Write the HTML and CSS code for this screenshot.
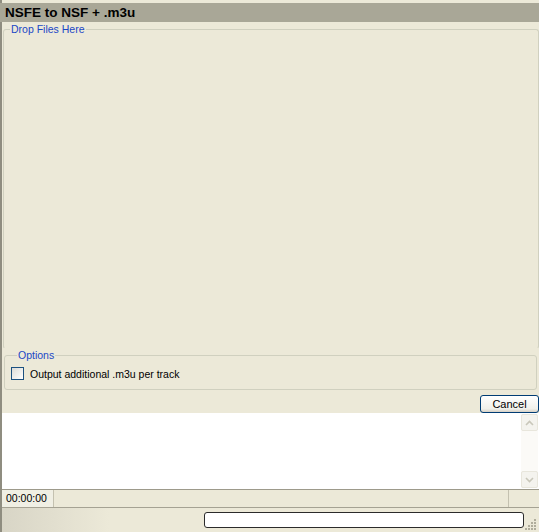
FILE: index.html
```html
<!DOCTYPE html>
<html>
<head>
<meta charset="utf-8">
<link rel="stylesheet" href="styles.css">
</head>
<body>
<div class="window">
  <div class="title">NSFE to NSF + .m3u</div>
  <div class="main">
    <fieldset class="group drop">
      <legend>Drop Files Here</legend>
    </fieldset>
    <fieldset class="group options">
      <legend>Options</legend>
      <label class="check"><span class="box"></span><span>Output additional .m3u per track</span></label>
    </fieldset>
  </div>
  <div class="btnrow"><button class="btn">Cancel</button></div>
  <div class="log">
    <div class="logtext"></div>
    <div class="vscroll">
      <div class="arrow up"><svg width="9" height="6" viewBox="0 0 9 6"><path d="M1 5 L4.5 1.5 L8 5" fill="none" stroke="#c9c7ba" stroke-width="1.6"/></svg></div>
      <div class="track"></div>
      <div class="arrow down"><svg width="9" height="6" viewBox="0 0 9 6"><path d="M1 1 L4.5 4.5 L8 1" fill="none" stroke="#c9c7ba" stroke-width="1.6"/></svg></div>
    </div>
  </div>
  <div class="status">
    <div class="panel time">00:00:00</div>
    <div class="panel fill"></div>
    <div class="panel end"></div>
  </div>
  <div class="bottom">
    <div class="progress"></div>
    <div class="grip">
      <svg width="12" height="12" viewBox="0 0 12 12">
        <g fill="#b0ad9c">
          <rect x="9" y="1" width="2" height="2"/>
          <rect x="6" y="4" width="2" height="2"/><rect x="9" y="4" width="2" height="2"/>
          <rect x="3" y="7" width="2" height="2"/><rect x="6" y="7" width="2" height="2"/><rect x="9" y="7" width="2" height="2"/>
          <rect x="0" y="10" width="2" height="2"/><rect x="3" y="10" width="2" height="2"/><rect x="6" y="10" width="2" height="2"/><rect x="9" y="10" width="2" height="2"/>
        </g>
      </svg>
    </div>
  </div>
</div>
</body>
</html>
```
FILE: styles.css
```css
html, body {
  margin: 0;
  padding: 0;
  background: #ece9d8;
}
.window {
  width: 539px;
  height: 532px;
  border-left: 2px solid #8f8d80;
  box-sizing: border-box;
  display: flex;
  flex-direction: column;
  font-family: "Liberation Sans", Arial, sans-serif;
  font-size: 10.5px;
  color: #000;
}
.title {
  margin-top: 3px;
  height: 19px;
  line-height: 19px;
  background: #a9a797;
  font-weight: bold;
  font-size: 13.5px;
  padding-left: 5px;
  margin-left: -2px;
}
.main {
  height: 369px;
  display: flex;
  flex-direction: column;
  padding: 0 0 0 1px;
}
.group {
  margin: 0;
  padding: 0;
  border: 1px solid #d0d0bf;
  border-radius: 3px;
  min-width: 0;
}
.group legend {
  color: #1a47c6;
  padding: 0 1px;
  margin-left: 6px;
  font-size: 10.5px;
  line-height: 13px;
}
.drop {
  margin-top: 1px;
  flex: 1;
  border-bottom-color: transparent;
}
.options {
  margin: 0 2px 1px 1px;
  height: 41px;
  box-sizing: border-box;
  padding: 5px 6px 0 6px;
}
.check {
  display: flex;
  align-items: center;
  gap: 6px;
}
.box {
  width: 11px;
  height: 11px;
  border: 1px solid #1c5180;
  background: linear-gradient(135deg, #dcdcd7, #fff);
}
.btnrow {
  display: flex;
  justify-content: flex-end;
  height: 22px;
  align-items: flex-end;
}
.btn {
  width: 59px;
  height: 18px;
  margin: 0;
  padding: 0;
  border: 1px solid #003c74;
  border-radius: 3px;
  background: linear-gradient(#ffffff, #f0f0ea 80%, #d6d0c5);
  font-family: "Liberation Sans", Arial, sans-serif;
  font-size: 11px;
  color: #000;
}
.log {
  height: 77px;
  box-sizing: border-box;
  background: #fff;
  display: flex;
  border-bottom: 1px solid #9d9a8b;
}
.logtext {
  flex: 1;
}
.vscroll {
  width: 17px;
  margin: 1px 1px 1px 0;
  background: #fbfaf7;
  display: flex;
  flex-direction: column;
}
.arrow {
  height: 17px;
  box-sizing: border-box;
  border: 1px solid #e8e6dc;
  border-radius: 2px;
  background: #f4f3ee;
  display: flex;
  align-items: center;
  justify-content: center;
}
.track {
  flex: 1;
}
.status {
  height: 18px;
  box-sizing: border-box;
  display: flex;
  border-bottom: 1px solid #a5a293;
}
.panel {
  border-right: 1px solid #c4c1b0;
  box-sizing: border-box;
  height: 17px;
  line-height: 17px;
}
.time {
  width: 52px;
  padding-left: 4px;
  color: #000;
  background: #f0efe4;
}
.fill {
  flex: 1;
}
.end {
  width: 30px;
  border-right: none;
}
.bottom {
  flex: 1;
  display: flex;
  align-items: center;
  justify-content: flex-end;
  background: linear-gradient(90deg, #d8d5c6, #ece9d8 20%);
}
.progress {
  width: 318px;
  height: 14px;
  background: #fff;
  border: 1px solid #2b2b2b;
  border-radius: 3px;
  margin-right: 1px;
}
.grip {
  width: 14px;
  height: 20px;
  display: flex;
  align-items: flex-end;
}
```
